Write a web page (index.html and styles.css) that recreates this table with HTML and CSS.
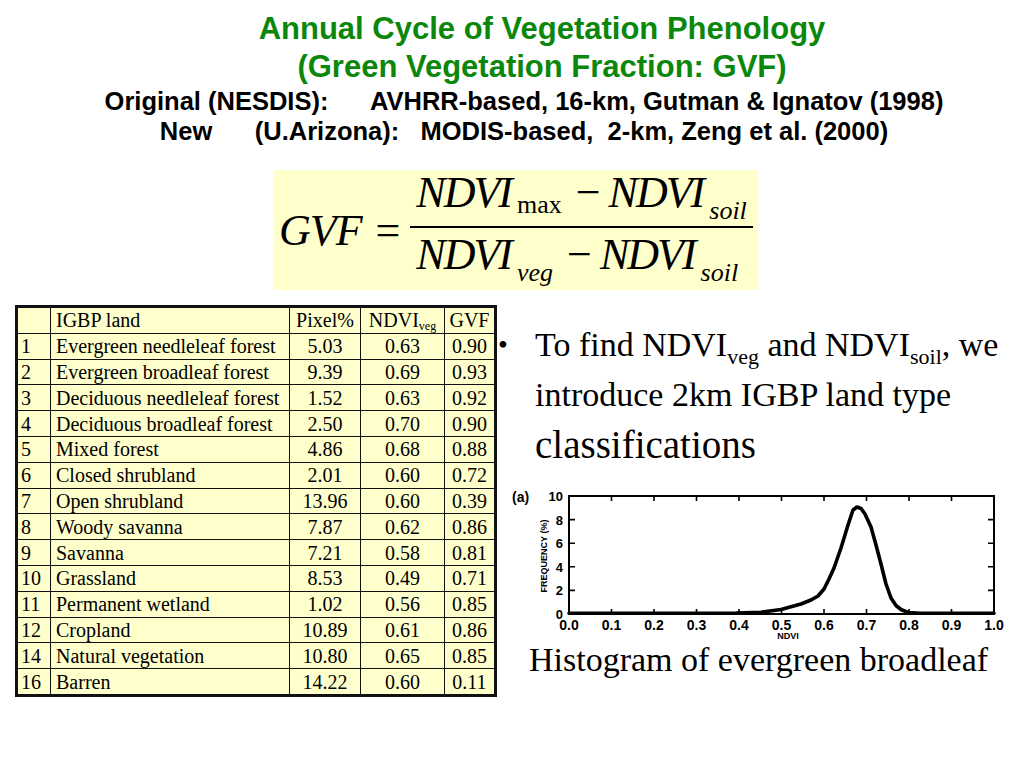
FILE: index.html
```html
<!DOCTYPE html>
<html>
<head>
<meta charset="utf-8">
<link rel="stylesheet" href="styles.css">
</head>
<body>
<div class="slide">
  <header class="header">
    <div class="title">Annual Cycle of Vegetation Phenology<br>(Green Vegetation Fraction: GVF)</div>
    <div class="subtitle"><div class="sub1">Original (NESDIS):      AVHRR-based, 16-km, Gutman &amp; Ignatov (1998)</div><div class="sub2">New      (U.Arizona):   MODIS-based,  2-km, Zeng et al. (2000)</div></div>
  </header>

  <div class="formula">
    <span class="lhs">GVF</span>
    <span class="eq">=</span>
    <span class="frac">
      <span class="num"><span class="v">NDVI</span><span class="sb up">max</span><span class="minus">−</span><span class="v">NDVI</span><span class="sb">soil</span></span>
      <span class="den"><span class="v">NDVI</span><span class="sb">veg</span><span class="minus">−</span><span class="v">NDVI</span><span class="sb">soil</span></span>
    </span>
  </div>

  <div class="main">
    <table class="land">
      <colgroup>
        <col class="c1"><col class="c2"><col class="c3"><col class="c4"><col class="c5">
      </colgroup>
      <tr><td></td><td class="name">IGBP land</td><td class="n">Pixel%</td><td class="n">NDVI<sub>veg</sub></td><td class="n">GVF</td></tr>
      <tr><td>1</td><td class="name">Evergreen needleleaf forest</td><td class="n">5.03</td><td class="n">0.63</td><td class="n">0.90</td></tr>
      <tr><td>2</td><td class="name">Evergreen broadleaf forest</td><td class="n">9.39</td><td class="n">0.69</td><td class="n">0.93</td></tr>
      <tr><td>3</td><td class="name">Deciduous needleleaf forest</td><td class="n">1.52</td><td class="n">0.63</td><td class="n">0.92</td></tr>
      <tr><td>4</td><td class="name">Deciduous broadleaf forest</td><td class="n">2.50</td><td class="n">0.70</td><td class="n">0.90</td></tr>
      <tr><td>5</td><td class="name">Mixed forest</td><td class="n">4.86</td><td class="n">0.68</td><td class="n">0.88</td></tr>
      <tr><td>6</td><td class="name">Closed shrubland</td><td class="n">2.01</td><td class="n">0.60</td><td class="n">0.72</td></tr>
      <tr><td>7</td><td class="name">Open shrubland</td><td class="n">13.96</td><td class="n">0.60</td><td class="n">0.39</td></tr>
      <tr><td>8</td><td class="name">Woody savanna</td><td class="n">7.87</td><td class="n">0.62</td><td class="n">0.86</td></tr>
      <tr><td>9</td><td class="name">Savanna</td><td class="n">7.21</td><td class="n">0.58</td><td class="n">0.81</td></tr>
      <tr><td>10</td><td class="name">Grassland</td><td class="n">8.53</td><td class="n">0.49</td><td class="n">0.71</td></tr>
      <tr><td>11</td><td class="name">Permanent wetland</td><td class="n">1.02</td><td class="n">0.56</td><td class="n">0.85</td></tr>
      <tr><td>12</td><td class="name">Cropland</td><td class="n">10.89</td><td class="n">0.61</td><td class="n">0.86</td></tr>
      <tr><td>14</td><td class="name">Natural vegetation</td><td class="n">10.80</td><td class="n">0.65</td><td class="n">0.85</td></tr>
      <tr><td>16</td><td class="name">Barren</td><td class="n">14.22</td><td class="n">0.60</td><td class="n">0.11</td></tr>
    </table>

    <div class="right">
      <div class="bullet">
        <span class="dot">•</span>
        <p class="btext">To find NDVI<sub>veg</sub> and NDVI<sub>soil</sub>, we introduce 2km IGBP land type <span class="big">classifications</span></p>
      </div>
      <svg class="hist" width="505" height="155" viewBox="512 486 505 155" xmlns="http://www.w3.org/2000/svg">
        <text x="516" y="501" class="lbl-a">(a)</text>
        <rect x="573" y="495" width="425" height="118" fill="none" stroke="#000" stroke-width="2"/>
        <g stroke="#000" stroke-width="1.6">
          <path d="M615.5 613v-5M658 613v-5M700.5 613v-5M743 613v-5M785.5 613v-5M828 613v-5M870.5 613v-5M913 613v-5M955.5 613v-5"/>
          <path d="M615.5 495v5M658 495v5M700.5 495v5M743 495v5M785.5 495v5M828 495v5M870.5 495v5M913 495v5M955.5 495v5"/>
          <path d="M573 589.4h6M573 565.8h6M573 542.2h6M573 518.6h6"/>
          <path d="M998 589.4h-6M998 565.8h-6M998 542.2h-6M998 518.6h-6"/>
        </g>
        <path d="M573 612.2 L740 612 L765 611.2 L785 608.5 L805 603 L815 599 L822 595 L828 588 L833 578 L838 567 L845 547 L852 524 L857 509 L861 506 L865 507.5 L869 513 L875 526 L880 544 L885 563 L890 583 L895 597 L900 604.5 L905 608.5 L912 611.5 L925 612.3 L998 612.3" fill="none" stroke="#000" stroke-width="3.6" stroke-linejoin="round" stroke-linecap="round"/>
        <g class="ylab">
          <text x="567" y="500">10</text>
          <text x="567" y="524">8</text>
          <text x="567" y="547">6</text>
          <text x="567" y="571">4</text>
          <text x="567" y="594">2</text>
          <text x="567" y="618">0</text>
        </g>
        <g class="xlab">
          <text x="573" y="629">0.0</text>
          <text x="615.5" y="629">0.1</text>
          <text x="658" y="629">0.2</text>
          <text x="700.5" y="629">0.3</text>
          <text x="743" y="629">0.4</text>
          <text x="785.5" y="629">0.5</text>
          <text x="828" y="629">0.6</text>
          <text x="870.5" y="629">0.7</text>
          <text x="913" y="629">0.8</text>
          <text x="955.5" y="629">0.9</text>
          <text x="998" y="629">1.0</text>
        </g>
        <text x="792" y="638" class="axt">NDVI</text>
        <text x="0" y="0" class="axt" transform="translate(551 555) rotate(-90)">FREQUENCY (%)</text>
      </svg>
      <div class="caption">Histogram of evergreen broadleaf</div>
    </div>
  </div>
</div>
</body>
</html>
```

FILE: styles.css
```css
html, body {
  margin: 0;
  padding: 0;
  background: #ffffff;
}
.slide {
  width: 1024px;
  height: 768px;
  overflow: hidden;
  font-family: "Liberation Serif", "Times New Roman", serif;
  color: #000;
}
.header {
  padding-top: 10px;
  font-family: "Liberation Sans", Arial, sans-serif;
  font-weight: bold;
  text-align: center;
}
.title {
  color: #0b870b;
  font-size: 31px;
  line-height: 38px;
  padding-left: 60px;
}
.subtitle {
  font-size: 25.5px;
  line-height: 30px;
  white-space: pre;
  padding-left: 24px;
}
.formula {
  margin: 24px 0 0 273px;
  width: 485px;
  height: 120px;
  background: #ffffcc;
  display: flex;
  align-items: center;
  font-style: italic;
  font-size: 44px;
  box-sizing: border-box;
  padding-left: 6px;
}
.lhs {
  letter-spacing: -1px;
}
.eq {
  font-style: normal;
  margin: 0 10px 0 14px;
}
.frac {
  display: flex;
  flex-direction: column;
  align-items: stretch;
  margin-top: -6px;
}
.num, .den {
  display: flex;
  align-items: baseline;
  line-height: 48px;
  padding: 0 6px;
}
.num {
  border-bottom: 2px solid #000;
  padding-bottom: 3px;
}
.den {
  padding-top: 3px;
}
.v {
  letter-spacing: -2px;
}
.sb {
  font-size: 26px;
  position: relative;
  top: 12px;
  margin-left: 6px;
}
.sb.up {
  font-style: normal;
  top: 6px;
}
.minus {
  font-style: normal;
  margin: 0 8px 0 14px;
}
.main {
  display: flex;
  margin-top: 15px;
  align-items: flex-start;
}
.land {
  margin-left: 15px;
  border-collapse: collapse;
  background: #ffffcc;
  border: 3px solid #111;
  font-size: 20px;
  table-layout: fixed;
  width: 479px;
}
.c1 { width: 34px; }
.c2 { width: 239px; }
.c3 { width: 71px; }
.c4 { width: 84px; }
.c5 { width: 51px; }
.land td {
  border: 1px solid #111;
  height: 24.8px;
  padding: 0 3px;
  line-height: 24px;
  white-space: nowrap;
}
.land td.name {
  padding-left: 5px;
}
.land td.n {
  text-align: center;
  padding: 0;
}
.land sub {
  font-size: 12px;
  line-height: 0;
  vertical-align: -3px;
}
.right {
  width: 528px;
  padding-left: 1px;
  box-sizing: border-box;
}
.bullet {
  display: flex;
  padding-top: 15px;
  font-size: 34px;
  line-height: 50px;
}
.dot {
  width: 37px;
  flex: none;
  font-size: 28px;
}
.btext {
  margin: 0;
  width: 490px;
}
.btext sub {
  font-size: 22px;
  line-height: 0;
}
.big {
  font-size: 39px;
}
.hist {
  display: block;
  margin: 15px 0 0 10px;
}
.lbl-a {
  font-family: "Liberation Sans", Arial, sans-serif;
  font-weight: bold;
  font-size: 14px;
}
.ylab text {
  font-family: "Liberation Sans", Arial, sans-serif;
  font-weight: bold;
  font-size: 13px;
  text-anchor: end;
}
.xlab text {
  font-family: "Liberation Sans", Arial, sans-serif;
  font-weight: bold;
  font-size: 14px;
  text-anchor: middle;
}
.axt {
  font-family: "Liberation Sans", Arial, sans-serif;
  font-weight: bold;
  font-size: 9px;
  text-anchor: middle;
}
.caption {
  font-size: 34px;
  line-height: 36px;
  margin-top: 0;
  padding-left: 31px;
}
```
